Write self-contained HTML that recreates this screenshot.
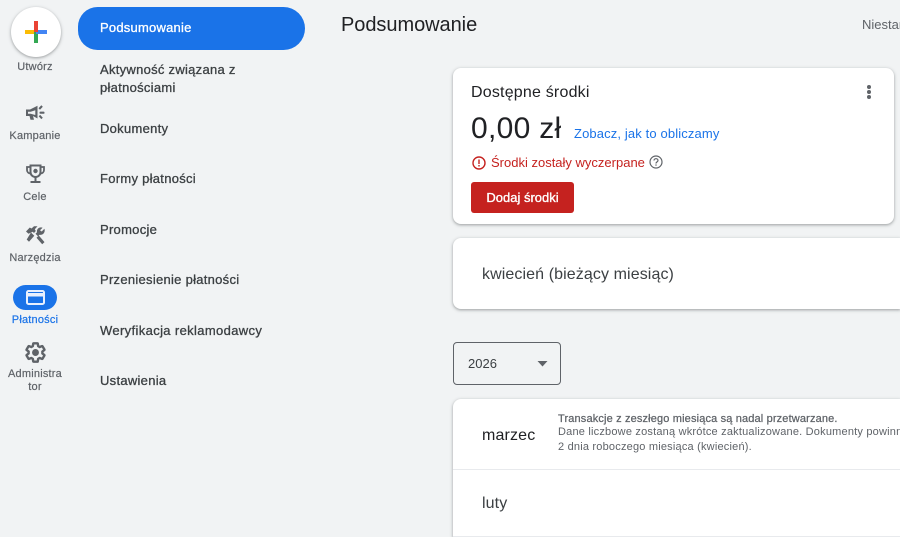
<!DOCTYPE html>
<html lang="pl">
<head>
<meta charset="utf-8">
<title>Podsumowanie</title>
<style>
html,body{margin:0;padding:0;width:900px;height:537px;overflow:hidden;background:#f1f3f4;font-family:"Liberation Sans",Arial,sans-serif;color:#202124}
#w{position:absolute;left:0;top:0;width:900px;height:537px;overflow:hidden}
.a{position:absolute;white-space:nowrap}
.rail{font-size:11px;color:#5f6368;text-align:center;width:70px;left:0;line-height:13px;letter-spacing:.2px;-webkit-text-stroke:.2px currentColor}
.nav{left:100px;font-size:13px;color:#3c4043;line-height:18px;letter-spacing:.28px;-webkit-text-stroke:.3px currentColor}
.card{position:absolute;background:#fff;border-radius:8px;box-shadow:0 1px 3px 1px rgba(60,64,67,.15),0 1px 2px rgba(60,64,67,.3)}
svg{position:absolute;display:block}
</style>
</head>
<body>
<div id="w">
<!-- Create button -->
<div class="a" style="left:11px;top:7px;width:50px;height:50px;border-radius:50%;background:#fff;box-shadow:0 1px 3px 1px rgba(60,64,67,.15),0 1px 2px rgba(60,64,67,.3)"></div>
<svg style="left:25px;top:21px" width="22" height="22" viewBox="0 0 22 22">
<rect x="0" y="9" width="11" height="4" fill="#fbbc04"/>
<rect x="9" y="11" width="4" height="11" fill="#34a853"/>
<rect x="11" y="9" width="11" height="4" fill="#4285f4"/>
<rect x="9" y="0" width="4" height="11" fill="#ea4335"/>
</svg>
<div class="a rail" style="top:61px">Utwórz</div>

<!-- Kampanie -->
<svg style="left:25px;top:104px" width="21" height="18" viewBox="0 0 21 18" fill="#5f6368">
<path fill-rule="evenodd" d="M1 5.500h4l7.500-3.800V14.500L8 12l1 3.800H5.500L4.500 12H1zM3 7.800v2h2.700L10.300 11V6.200L5.700 7.800z"/>
<rect x="14.500" y="7.600" width="5" height="2.200" rx=".8"/>
<path d="M13.500 4.300l2.800-3 1.500 1.400-2.800 3zM13.700 12.300l1.500-1.400 2.600 2.800-1.500 1.400z"/>
</svg>
<div class="a rail" style="top:130px">Kampanie</div>

<!-- Cele -->
<svg style="left:26px;top:164px" width="19" height="20" viewBox="0 0 19 20">
<path d="M4.500 1.500h10V8c0 2.900-2.200 5-5 5s-5-2.100-5-5z" fill="none" stroke="#5f6368" stroke-width="2"/>
<path d="M4.500 3H1v3c0 2 1.500 3.500 3.700 3.500M14.500 3H18v3c0 2-1.500 3.500-3.700 3.500" fill="none" stroke="#5f6368" stroke-width="1.800"/>
<circle cx="9.500" cy="7" r="2.200" fill="#5f6368"/>
<rect x="8.500" y="13" width="2" height="4" fill="#5f6368"/>
<rect x="4.500" y="17" width="10" height="2" fill="#5f6368"/>
</svg>
<div class="a rail" style="top:191px">Cele</div>

<!-- Narzędzia -->
<svg style="left:26px;top:226px" width="19" height="19" viewBox="0 0 19 19" fill="#5f6368">
<path d="M0 5.500L3.800 1.500 5.500 2.500 8 .3h3.500l-2.700 3 1 1.700L8 7 6.700 5.700 2.500 7.800z"/>
<path d="M5 6.500l3.300 3.200L3 15.800.7 13.500z"/>
<path d="M18.400 2.800c.7 1.900.2 3.800-1.100 5-1.100 1-2.500 1.300-3.800 1L12 10.300 9.500 7.800l1.500-1.500c-.3-1.300 0-2.700 1.100-3.800C13.300 1.400 15 1 16.600 1.700L14 4.200l1.700 1.300z"/>
<path d="M10.500 11.800l2.300-2.300 5.700 6.600-2.300 2.200z"/>
</svg>
<div class="a rail" style="top:252px">Narzędzia</div>

<!-- Płatności -->
<div class="a" style="left:13px;top:285px;width:44px;height:25px;border-radius:13px;background:#1a73e8"></div>
<svg style="left:26px;top:290px" width="19" height="15" viewBox="0 0 19 15">
<rect x="1" y="1" width="17" height="13" rx="1.500" fill="#1a73e8" stroke="#e8f0fe" stroke-width="2"/>
<rect x="1" y="3" width="17" height="3.500" fill="#e8f0fe"/>
</svg>
<div class="a rail" style="top:314px;color:#1a73e8">Płatności</div>

<!-- Administrator -->
<svg style="left:24px;top:341px" width="23" height="23" viewBox="0 0 24 24">
<path d="M19.140 12.940c.04-.3.06-.61.06-.94 0-.32-.02-.64-.07-.94l2.030-1.580c.18-.14.23-.41.12-.61l-1.920-3.320c-.12-.22-.37-.29-.59-.22l-2.390.96c-.5-.38-1.030-.7-1.620-.94l-.36-2.540c-.04-.24-.24-.41-.48-.41h-3.840c-.24 0-.43.17-.47.41l-.36 2.540c-.59.24-1.130.57-1.620.94l-2.390-.96c-.22-.08-.47 0-.59.22L2.740 8.870c-.12.21-.08.47.12.61l2.030 1.580c-.05.3-.09.63-.09.94s.02.64.07.94l-2.030 1.580c-.18.14-.23.41-.12.61l1.920 3.320c.12.22.37.29.59.22l2.390-.96c.5.38 1.030.7 1.620.94l.36 2.540c.05.24.24.41.48.41h3.840c.24 0 .44-.17.47-.41l.36-2.540c.59-.24 1.130-.56 1.620-.94l2.390.96c.22.08.47 0 .59-.22l1.920-3.320c.12-.22.07-.47-.12-.61l-2.010-1.580z" fill="none" stroke="#5f6368" stroke-width="2.500" stroke-linejoin="round"/>
<circle cx="12" cy="12" r="3.600" fill="#5f6368"/>
</svg>
<div class="a rail" style="top:367px;margin-top:1px">Administra<br>tor</div>

<!-- Secondary nav -->
<div class="a" style="left:78px;top:7px;width:227px;height:43px;background:#1a73e8;border-radius:20px 22px 22px 20px"></div>
<div class="a nav" style="top:19px;color:#fff;letter-spacing:.22px">Podsumowanie</div>
<div class="a nav" style="top:61px">Aktywność związana z<br>płatnościami</div>
<div class="a nav" style="top:120px">Dokumenty</div>
<div class="a nav" style="top:170px">Formy płatności</div>
<div class="a nav" style="top:221px">Promocje</div>
<div class="a nav" style="top:271px">Przeniesienie płatności</div>
<div class="a nav" style="top:322px;letter-spacing:.36px">Weryfikacja reklamodawcy</div>
<div class="a nav" style="top:372px">Ustawienia</div>

<!-- Header -->
<div class="a" style="left:341px;top:12px;font-size:20px;line-height:26px;color:#202124;letter-spacing:-.05px">Podsumowanie</div>
<div class="a" style="left:862px;top:17px;width:38px;overflow:hidden;font-size:13px;line-height:16px;color:#5f6368">Niestandardowe</div>

<!-- Funds card -->
<div class="card" style="left:453px;top:68px;width:441px;height:156px"></div>
<div class="a" style="left:471px;top:83px;font-size:16px;line-height:20px;letter-spacing:.2px">Dostępne środki</div>
<svg style="left:866px;top:84px" width="6" height="16" viewBox="0 0 6 16" fill="#5f6368"><circle cx="3" cy="3" r="2"/><circle cx="3" cy="8" r="2"/><circle cx="3" cy="13" r="2"/></svg>
<div class="a" style="left:471px;top:110px;font-size:30px;line-height:38px;letter-spacing:.3px">0,00 zł</div>
<div class="a" style="left:574px;top:125px;font-size:13px;line-height:18px;color:#1a73e8;letter-spacing:.13px">Zobacz, jak to obliczamy</div>
<svg style="left:472px;top:156px" width="14" height="14" viewBox="0 0 14 14"><circle cx="7" cy="7" r="6" fill="none" stroke="#c5221f" stroke-width="1.400"/><rect x="6.300" y="3.500" width="1.400" height="4.500" fill="#c5221f"/><rect x="6.300" y="9" width="1.400" height="1.500" fill="#c5221f"/></svg>
<div class="a" style="left:491px;top:155px;font-size:13px;line-height:16px;color:#c5221f">Środki zostały wyczerpane</div>
<svg style="left:649px;top:155px" width="14" height="14" viewBox="0 0 14 14"><circle cx="7" cy="7" r="6" fill="none" stroke="#5f6368" stroke-width="1.200"/><path d="M5 5.500C5 4.400 5.900 3.700 7 3.700s2 .7 2 1.700c0 1.500-2 1.500-2 3.100" fill="none" stroke="#5f6368" stroke-width="1.200"/><rect x="6.400" y="9.400" width="1.200" height="1.300" fill="#5f6368"/></svg>
<div class="a" style="left:471px;top:182px;width:103px;height:31px;border-radius:3px;background:#c5221f;color:#fff;font-size:13px;line-height:31px;text-align:center;-webkit-text-stroke:.35px #fff">Dodaj środki</div>

<!-- Current month card -->
<div class="card" style="left:453px;top:238px;width:447px;height:71px;border-radius:8px 0 0 8px"></div>
<div class="a" style="left:482px;top:265px;font-size:16px;line-height:20px;color:#3c4043;letter-spacing:.1px">kwiecień (bieżący miesiąc)</div>

<!-- Year select -->
<div class="a" style="left:453px;top:342px;width:106px;height:41px;border:1px solid #5f6368;border-radius:4px"></div>
<div class="a" style="left:468px;top:356px;font-size:13px;line-height:16px;color:#3c4043">2026</div>
<svg style="left:537px;top:361px" width="11" height="6" viewBox="0 0 11 6" fill="#5f6368"><path d="M0.500 0h10l-5 5.500z"/></svg>

<!-- Month list card -->
<div class="card" style="left:453px;top:399px;width:447px;height:138px;border-radius:8px 0 0 0"></div>
<div class="a" style="left:482px;top:426px;font-size:16px;line-height:20px;color:#202124;letter-spacing:.15px">marzec</div>
<div class="a" style="left:558px;top:412px;font-size:11px;line-height:14px;color:#5f6368;letter-spacing:.15px;-webkit-text-stroke:.25px #5f6368">Transakcje z zeszłego miesiąca są nadal przetwarzane.</div>
<div class="a" style="left:558px;top:425px;width:342px;overflow:hidden;font-size:11px;line-height:15px;color:#5f6368;letter-spacing:.2px">Dane liczbowe zostaną wkrótce zaktualizowane. Dokumenty powinny być dostępne do</div>
<div class="a" style="left:558px;top:440px;font-size:11px;line-height:15px;color:#5f6368;letter-spacing:.2px">2 dnia roboczego miesiąca (kwiecień).</div>
<div class="a" style="left:453px;top:469px;width:447px;height:1px;background:#e8eaed"></div>
<div class="a" style="left:482px;top:494px;font-size:16px;line-height:20px;color:#3c4043;letter-spacing:.1px">luty</div>
<div class="a" style="left:453px;top:536px;width:447px;height:1px;background:#e8eaed"></div>
</div>
</body>
</html>
